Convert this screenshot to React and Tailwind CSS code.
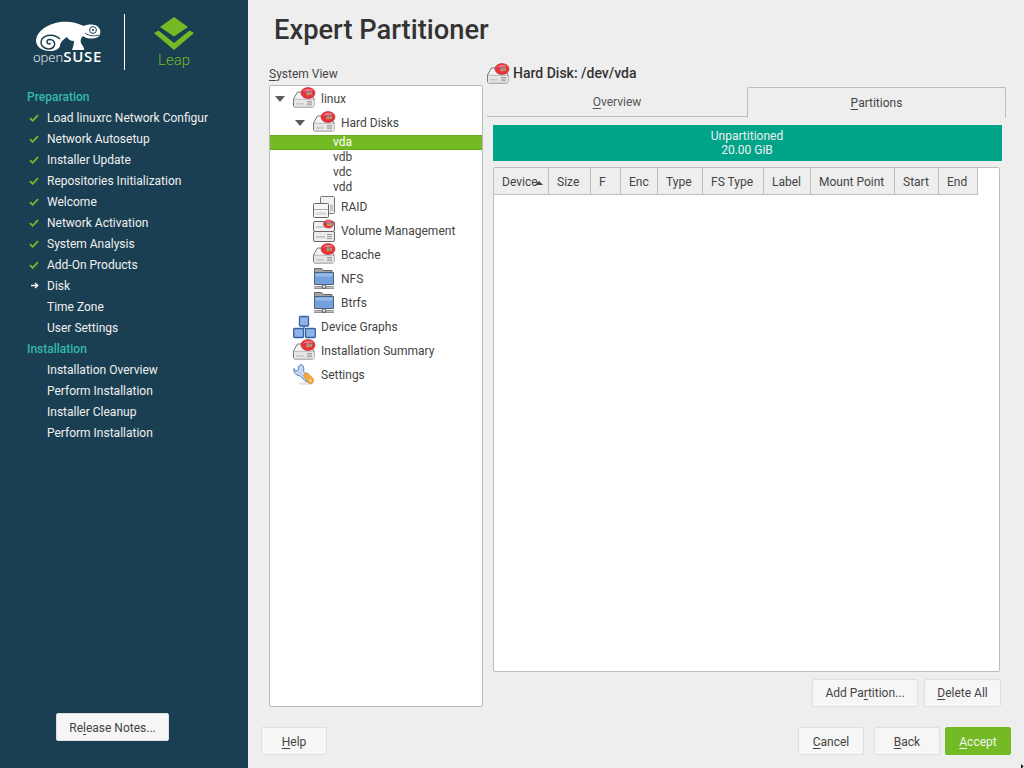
const DISK_RED = "#e8333c";

function Disk({ x = 0, y = 0 }) {
  return (
    <g transform={`translate(${x} ${y})`}>
      <path d="M4.500 6.500h13l3.500 7v6.500a1.500 1.500 0 0 1-1.500 1.500h-18A1.500 1.500 0 0 1 .5 20v-6.500z" fill="#f4f4f4" stroke="#777" strokeWidth="1" />
      <path d="M1 14.200h20v6.800H1z" fill="#e6e6e6" />
      <path d="M.8 13.800h20.400" stroke="#a0a0a0" strokeWidth=".7" />
      <path d="M14 16h5M14 17.600h5M14 19.200h5" stroke="#999" strokeWidth=".9" />
      <path d="M3 18.400h8" stroke="#c4c4c4" strokeWidth="1.400" />
    </g>
  );
}

function Badge({ cx = 15, cy = 6, rx = 7, ry = 5.500 }) {
  return (
    <g>
      <ellipse cx={cx} cy={cy} rx={rx} ry={ry} fill={DISK_RED} stroke="#b8252e" strokeWidth=".6" />
      <path d={`M${cx - rx + 1.500} ${cy - 1.500}Q${cx} ${cy - ry - 1} ${cx + rx - 1.500} ${cy - 2}Q${cx} ${cy - 2.500} ${cx - rx + 1.500} ${cy - 1.500}z`} fill="#f37a80" />
      <rect x={cx - 1.500} y={cy - 1.800} width="3" height="2" fill="#7d8fbf" />
      <rect x={cx + 1.500} y={cy - 1.200} width="2.500" height="3" fill="#9aa27a" />
      <rect x={cx - 1.500} y={cy + .2} width="3" height="2" fill="#c5a24a" />
    </g>
  );
}

const Icon = ({ children, className = "" }) => (
  <svg width="24" height="24" viewBox="0 0 24 24" className={`shrink-0 ${className}`}>{children}</svg>
);

const DiskGlyph = () => (
  <>
    <Disk x={0} y={-1.500} />
    <Badge />
  </>
);

const DiskIcon = () => <Icon><DiskGlyph /></Icon>;

const RaidIcon = () => (
  <Icon>
    <rect x="7.500" y="1.500" width="14" height="17" rx="1" fill="#f0f0f0" stroke="#777" />
    <path d="M17 11h3M17 13h3M17 15h3" stroke="#999" />
    <rect x=".5" y="8.500" width="15" height="14" rx="1" fill="#f6f6f6" stroke="#666" />
    <path d="M1 14.500h14" stroke="#aaa" />
    <rect x="2.500" y="17" width="11" height="3" fill="#dcdcdc" />
  </Icon>
);

const VolumeIcon = () => (
  <Icon>
    <rect x=".5" y="2.500" width="21" height="10" rx="1.500" fill="#f0f0f0" stroke="#666" />
    <path d="M3 8h10" stroke="#bbb" strokeWidth="1.400" />
    <rect x=".5" y="12.500" width="21" height="10" rx="1.500" fill="#ebebeb" stroke="#666" />
    <path d="M14 15.500h5M14 17.500h5M14 19.500h5" stroke="#999" />
    <path d="M3 18h9" stroke="#bbb" strokeWidth="1.400" />
    <Badge cx={15.500} cy={5} rx={5} ry={4} />
  </Icon>
);

const FolderIcon = () => (
  <Icon>
    <path d="M1.500 1.500h7l2 2h8.500v6H1.500z" fill="#a3a3a3" stroke="#666" />
    <path d="M1.500 5.500h19v12h-19z" fill="#74a0dc" stroke="#4f627d" />
    <path d="M2.500 6.500h17v3h-17z" fill="#9bbce9" />
    <path d="M1 19.800h20M1 21.300h20" stroke="#555" strokeWidth=".8" />
    <circle cx="11" cy="19.500" r="2" fill="#d5d5d5" stroke="#555" />
  </Icon>
);

const GraphIcon = () => (
  <Icon>
    <path d="M11 11v3" stroke="#2c5e9e" strokeWidth="1.400" />
    <rect x="6.500" y="1.500" width="9" height="9.500" rx="1" fill="#8fb3e4" stroke="#2e60a3" strokeWidth="1.300" />
    <rect x=".7" y="13.500" width="9.800" height="9" rx="1" fill="#8fb3e4" stroke="#2e60a3" strokeWidth="1.300" />
    <rect x="12.500" y="13.500" width="9.800" height="9" rx="1" fill="#8fb3e4" stroke="#2e60a3" strokeWidth="1.300" />
  </Icon>
);

const WrenchIcon = () => (
  <Icon>
    <ellipse cx="13" cy="20.500" rx="8" ry="1.500" fill="#e4e4e4" />
    <path d="M8 1.500 5 3.800l.6 3-3 1.400L1 5.400C.3 9 2.400 12.500 6.400 12.500L13.500 19l4-4L10.500 8.500C11.500 5 10.500 2 8 1.500z" fill="#c3d6ee" stroke="#5a84bd" strokeWidth="1" />
    <path d="M10.500 12.500l3.500-3 6 6c1 1.500.6 3.200-.4 4.200-1.200 1-3 1.200-4.200.2z" fill="#f5ab3e" stroke="#d2851a" strokeWidth=".8" />
    <circle cx="17.500" cy="17.500" r="1" fill="#fff2cf" />
  </Icon>
);

const Check = () => (
  <svg width="10" height="8" viewBox="0 0 10 8" className="shrink-0">
    <path d="M1 4.200 3.600 6.800 9 1.200" fill="none" stroke="#73ba25" strokeWidth="1.800" />
  </svg>
);

const Arrow = () => (
  <svg width="8" height="7" viewBox="0 0 8 7" className="shrink-0">
    <path d="M0 3.500h6M4 1l2.800 2.500L4 6" fill="none" stroke="#fff" strokeWidth="1.300" />
  </svg>
);

const Caret = () => (
  <svg width="10" height="6" viewBox="0 0 10 6" className="shrink-0"><path d="M0 0h10L5 6z" fill="#5b5b5b" /></svg>
);

function Logo() {
  return (
    <div className="flex h-[86px] pt-[14px] pl-[33px] shrink-0">
      <div className="w-[68px] flex flex-col items-start">
        <svg width="68" height="32" viewBox="33 20 68 32" className="mt-[6px]">
          <path fill="#fff" d="M36 40C37 31 47 24 60 22 68 21 76 22 84 26 87 24 94 24 97 26 100 28 101 31 100 34 99 38 94 39 89 38.500 86 38 84 37 83 36 81 38 80 40 81 43L84 48V50H72C73 47 74 44 74 41 70 41 68 39 67 37 64 39 60 42 60 46 59 49 55 51 50 51 42 51 36 47 36 40Z" />
          <path d="M60 39C55 34 46 34 42 39 39 45 44 49 49 49 54 49 56 44 53.500 41 51 38.500 47 39 47 42 47 44 50 44.500 50.500 43" fill="none" stroke="#1a3f52" strokeWidth="1.500" />
          <circle cx="93" cy="30" r="3.400" fill="none" stroke="#1a3f52" strokeWidth="1" />
          <circle cx="93" cy="30" r="1.100" fill="#1a3f52" />
          <path d="M85 33c4 3 9 3.500 14 2" fill="none" stroke="#1a3f52" strokeWidth=".9" />
        </svg>
        <div className="text-white text-[13px] leading-[14px] -mt-[3px] whitespace-nowrap font-['Open_Sans',sans-serif]">
          <span className="font-light">open</span><span className="font-semibold tracking-[0.7px] text-[15px]">SUSE</span>
        </div>
      </div>
      <div className="w-px h-[56px] bg-white ml-[23px]" />
      <div className="flex flex-col items-center ml-[29px] w-[40px]">
        <svg width="40" height="33" viewBox="0 0 40 33" className="mt-[3px]">
          <path d="M20 0 34 10 20 19.500 6 10z" fill="#73ba25" />
          <path d="M0 16 4.500 13.500 20 26 35.500 13.500 40 16 20 33z" fill="#73ba25" />
        </svg>
        <div className="text-[#73ba25] text-[15px] leading-[18px] mt-[1px] font-light">Leap</div>
      </div>
    </div>
  );
}

const steps = [
  ["h", "Preparation"],
  ["c", "Load linuxrc Network Configur"],
  ["c", "Network Autosetup"],
  ["c", "Installer Update"],
  ["c", "Repositories Initialization"],
  ["c", "Welcome"],
  ["c", "Network Activation"],
  ["c", "System Analysis"],
  ["c", "Add-On Products"],
  ["a", "Disk"],
  ["n", "Time Zone"],
  ["n", "User Settings"],
  ["h", "Installation"],
  ["n", "Installation Overview"],
  ["n", "Perform Installation"],
  ["n", "Installer Cleanup"],
  ["n", "Perform Installation"],
];

function Step({ kind, label }) {
  if (kind === "h") {
    return <div className="h-[21px] leading-[23px] pl-[27px] text-[#35b9ab] font-medium">{label}</div>;
  }
  return (
    <div className="h-[21px] flex items-center text-[#f0f0f0]">
      <div className="w-[47px] pl-[29px] shrink-0 flex items-center">
        {kind === "c" && <Check />}
        {kind === "a" && <span className="pl-[2px] flex"><Arrow /></span>}
      </div>
      <div className="whitespace-nowrap">{label}</div>
    </div>
  );
}

function Btn({ className = "", tone = "bg-[#f6f6f6] border-[#dfdfdf] text-[#444]", children }) {
  return (
    <button className={`h-[28px] rounded-[2px] border text-[12px] flex items-center justify-center shrink-0 ${tone} ${className}`}>
      {children}
    </button>
  );
}

const M = ({ children }) => <span className="underline underline-offset-[2px] decoration-1">{children}</span>;

function Sidebar() {
  return (
    <aside className="w-[248px] shrink-0 bg-[#1a3f52] flex flex-col">
      <Logo />
      <div className="flex-1">
        {steps.map(([k, l], i) => <Step key={i} kind={k} label={l} />)}
      </div>
      <div className="flex pb-[27px] pl-[56px]">
        <Btn className="w-[113px] pt-px">Re<M>l</M>ease Notes...</Btn>
      </div>
    </aside>
  );
}

function TreeRow({ indent, caret, icon, label }) {
  return (
    <div className="h-[24px] flex items-center whitespace-nowrap" style={{ paddingLeft: indent }}>
      <div className="w-[18px] shrink-0 flex">{caret && <Caret />}</div>
      {icon}
      <span className="ml-[4px]">{label}</span>
    </div>
  );
}

function Tree() {
  return (
    <div className="flex-1 bg-white border border-[#b9b9b9] rounded-[2px] text-[#444] pt-px">
      <TreeRow indent={5} caret icon={<DiskIcon />} label="linux" />
      <TreeRow indent={25} caret icon={<DiskIcon />} label="Hard Disks" />
      <div className="h-[15px] leading-[15px] bg-[#73ba25] text-white pl-[63px] border-y border-[#69a822]">
        <span className="block -mt-px">vda</span>
      </div>
      {["vdb", "vdc", "vdd"].map((d) => (
        <div key={d} className="h-[15px] leading-[15px] pl-[63px]">{d}</div>
      ))}
      <TreeRow indent={25} icon={<RaidIcon />} label="RAID" />
      <TreeRow indent={25} icon={<VolumeIcon />} label="Volume Management" />
      <TreeRow indent={25} icon={<DiskIcon />} label="Bcache" />
      <TreeRow indent={25} icon={<FolderIcon />} label="NFS" />
      <TreeRow indent={25} icon={<FolderIcon />} label="Btrfs" />
      <TreeRow indent={5} icon={<GraphIcon />} label="Device Graphs" />
      <TreeRow indent={5} icon={<DiskIcon />} label="Installation Summary" />
      <TreeRow indent={5} icon={<WrenchIcon />} label="Settings" />
    </div>
  );
}

const cols = [
  ["Device", 55],
  ["Size", 42],
  ["F", 30],
  ["Enc", 37],
  ["Type", 45],
  ["FS Type", 61],
  ["Label", 47],
  ["Mount Point", 84],
  ["Start", 44],
  ["End", 39],
];

function Table() {
  return (
    <div className="flex-1 ml-[6px] mr-[6px] mt-[6px] bg-white border border-[#bdbdbd] rounded-[2px] flex flex-col">
      <div className="flex h-[27px] shrink-0">
        {cols.map(([c, w]) => (
          <div key={c} style={{ width: w }} className="relative shrink-0 bg-[#eeeeee] border-r border-b border-[#bdbdbd] flex items-center pl-[8px] pt-[2px] text-[#444]">
            {c}
            {c === "Device" && (
              <svg width="8" height="4" viewBox="0 0 8 4" className="absolute left-[41px] top-[13px]"><path d="M0 4h8L4 0z" fill="#444" /></svg>
            )}
          </div>
        ))}
      </div>
    </div>
  );
}

function Right() {
  return (
    <div className="flex-1 min-w-0 ml-[4px] flex flex-col">
      <div className="h-[24px] flex items-center mt-[2px] text-[14px] font-medium text-[#333]">
        <svg width="24" height="24" viewBox="0 0 24 24" className="shrink-0 mt-[3px]"><DiskGlyph /></svg>
        <span className="ml-[2px]">Hard Disk: /dev/vda</span>
      </div>
      <div className="flex h-[31px] mt-[2px] shrink-0">
        <div className="w-[260px] border-b border-[#bdbdbd] flex items-center justify-center text-[#555] mt-[1px] h-[29px]"><span><M>O</M>verview</span></div>
        <div className="w-[259px] border border-b-0 border-[#bdbdbd] rounded-t-[2px] flex items-center justify-center text-[#444]"><span><M>P</M>artitions</span></div>
      </div>
      <div className="flex-1 flex flex-col min-h-0">
        <div className="mt-[7px] ml-[6px] w-[509px] h-[36px] bg-[#00a489] text-[#f0f0f0] text-center leading-[14px] pt-[4px] pr-px shrink-0">
          <div>Unpartitioned</div>
          <div>20.00 GiB</div>
        </div>
        <Table />
        <div className="flex justify-end gap-[6px] mt-[7px] mr-[5px] shrink-0">
          <Btn className="w-[106px]">Add Pa<M>r</M>tition...</Btn>
          <Btn className="w-[77px]"><M>D</M>elete All</Btn>
        </div>
      </div>
    </div>
  );
}

export default function App() {
  return (
    <div className="w-[1024px] h-[768px] flex overflow-hidden bg-[#eeeeee] text-[12px] font-['Roboto',sans-serif] relative">
      <Sidebar />
      <main className="flex-1 min-w-0 flex flex-col">
        <h1 className="h-[59px] shrink-0 pl-[26px] pt-[12px] text-[27.3px] leading-[36px] font-medium text-[#333]">Expert Partitioner</h1>
        <div className="flex-1 min-h-0 flex pl-[21px] pr-[18px]">
          <div className="w-[214px] shrink-0 flex flex-col">
            <div className="h-[26px] pt-[8px] leading-[14px] text-[#444]"><M>S</M>ystem View</div>
            <Tree />
          </div>
          <Right />
        </div>
        <div className="h-[61px] shrink-0 flex items-start pt-[20px] pl-[13px] pr-[13px]">
          <Btn className="w-[66px] pt-px"><M>H</M>elp</Btn>
          <div className="flex-1" />
          <Btn className="w-[66px] mr-[10px] pt-px"><M>C</M>ancel</Btn>
          <Btn className="w-[66px] mr-[5px] pt-px"><M>B</M>ack</Btn>
          <Btn className="w-[66px] pt-px" tone="bg-[#73ba25] border-[#73ba25] text-[#f4f4f4]"><M>A</M>ccept</Btn>
        </div>
      </main>
      <svg width="3" height="4" viewBox="0 0 3 4" className="absolute left-[1021px] top-[764px]"><path d="M0 0 3 3H1.500V4H0z" fill="#111" /></svg>
    </div>
  );
}
